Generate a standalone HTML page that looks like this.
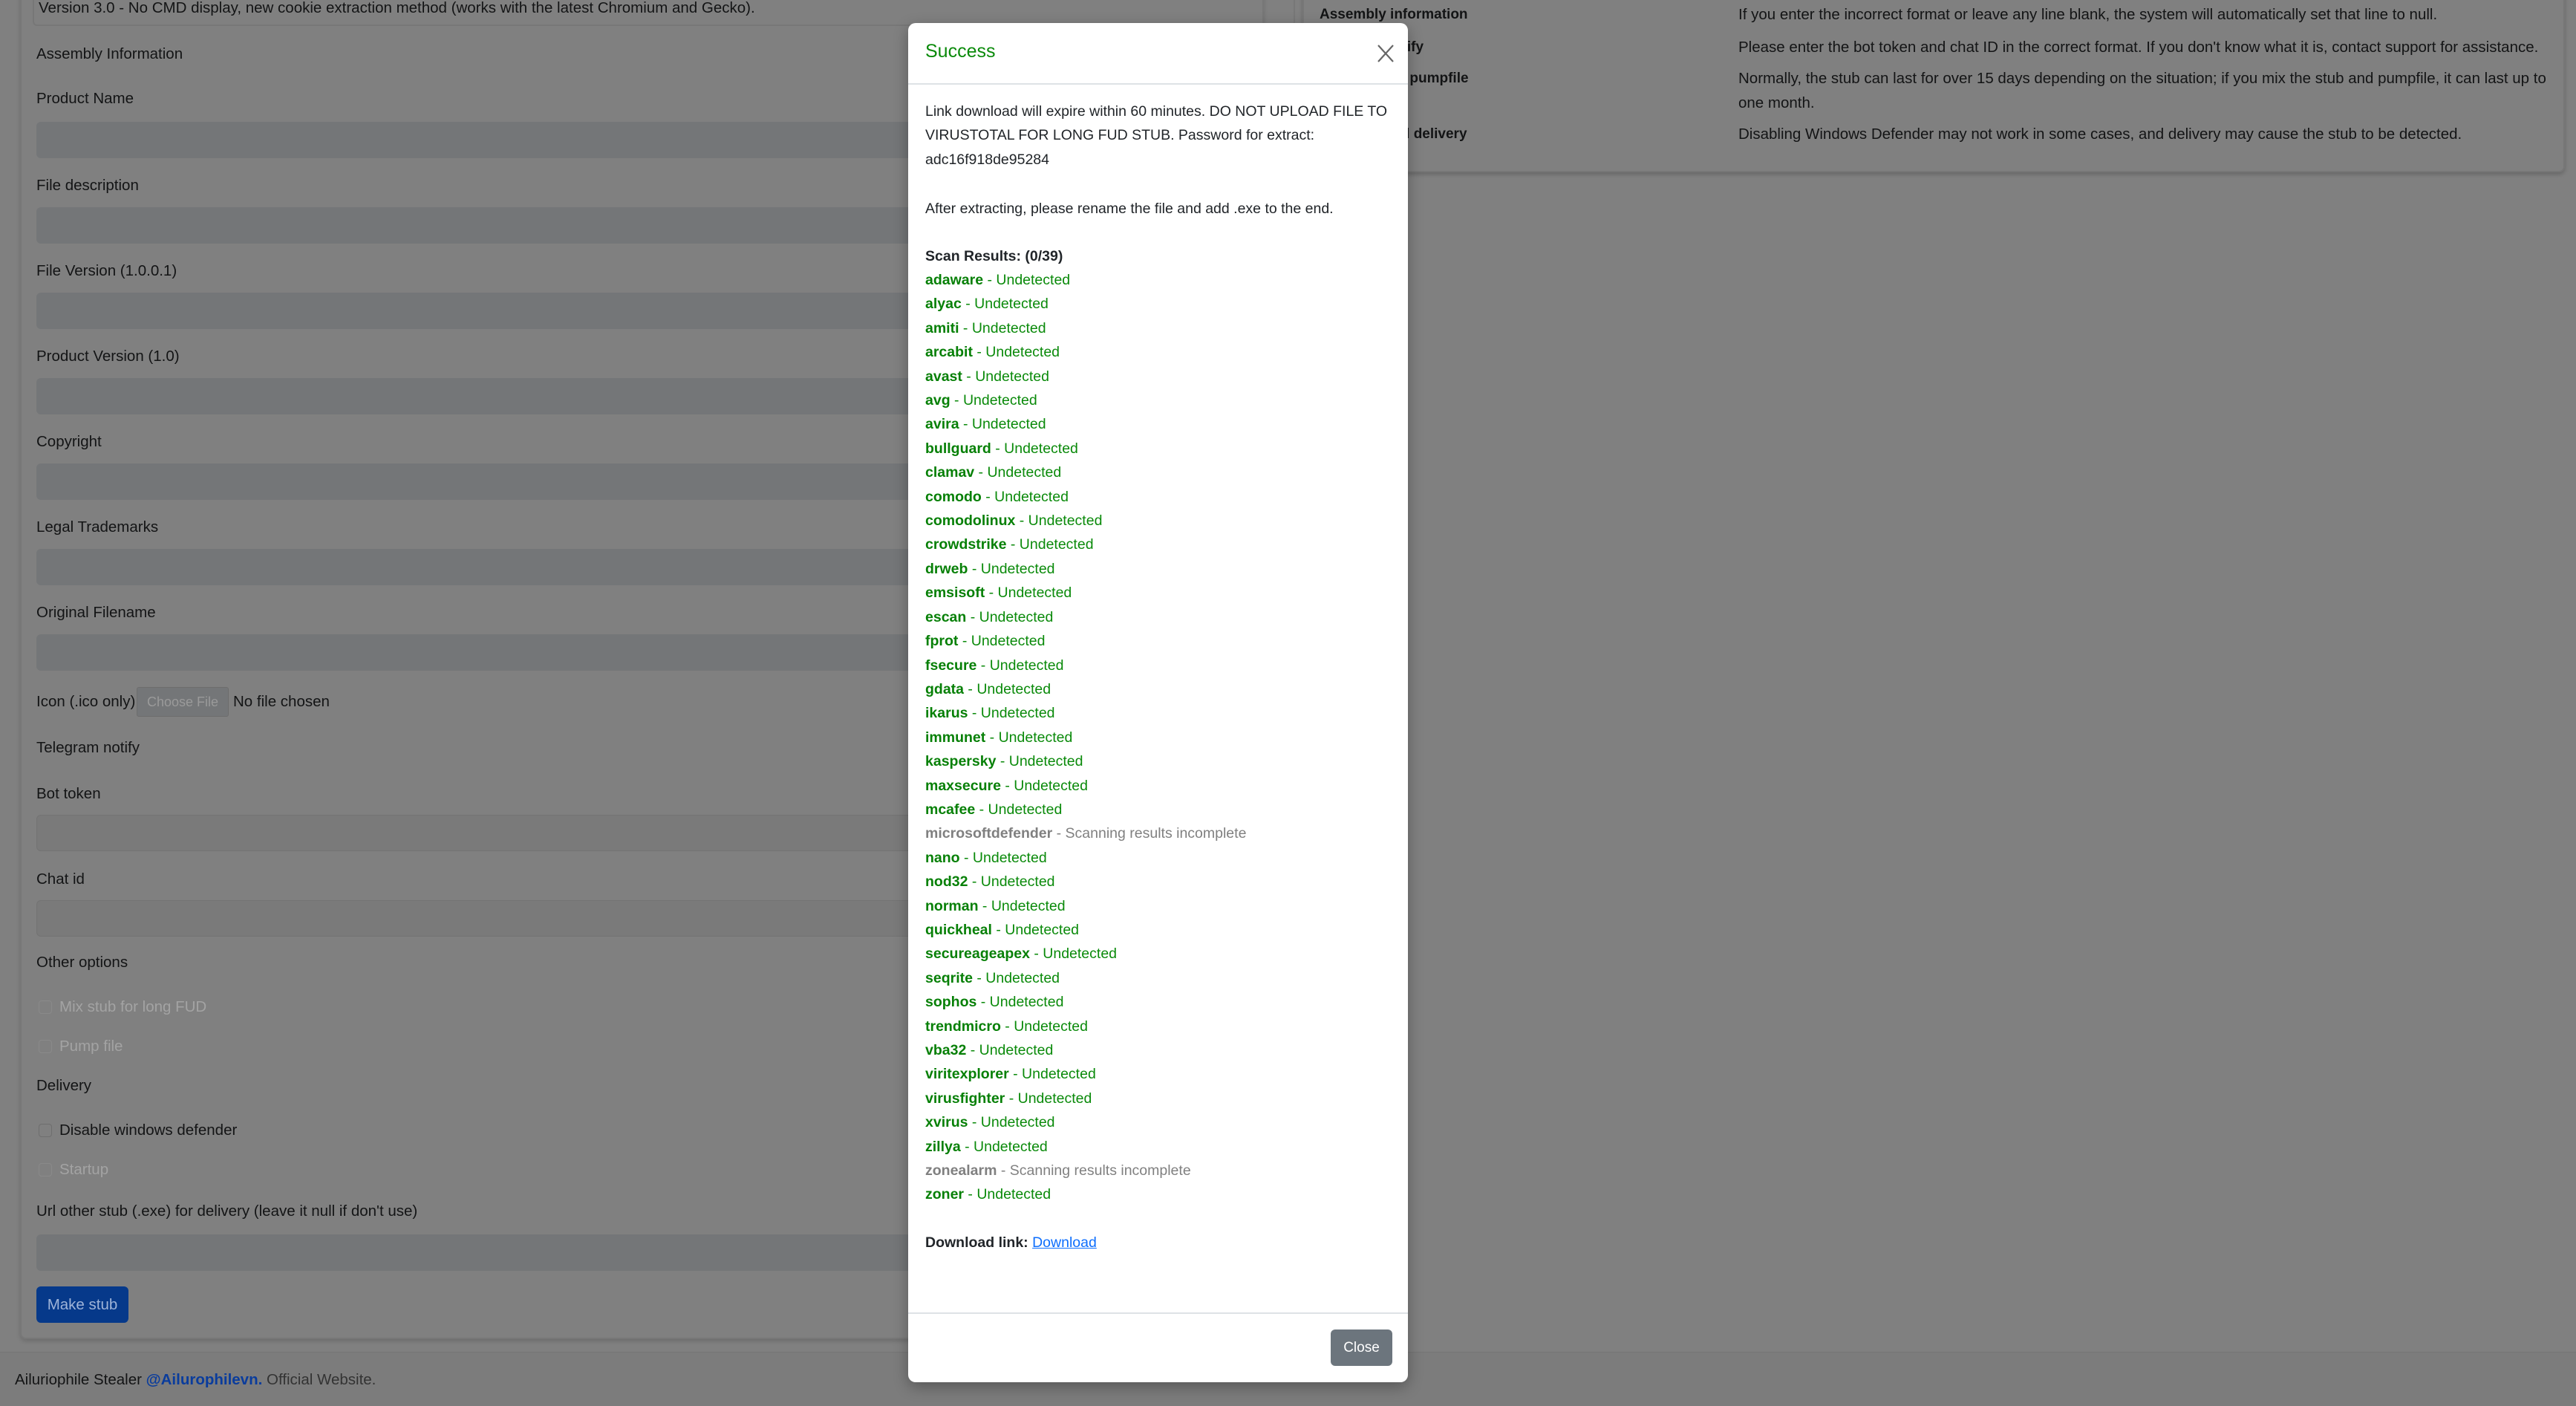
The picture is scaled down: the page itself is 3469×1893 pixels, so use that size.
<!DOCTYPE html>
<html><head><meta charset="utf-8">
<style>
*{margin:0;padding:0;box-sizing:border-box}
html,body{width:3469px;height:1893px;overflow:hidden}
body{background:#808080;font-family:"Liberation Sans",sans-serif;font-size:20.5px;color:#131415;position:relative}
.a{position:absolute;white-space:nowrap;line-height:30px}
.inp{position:absolute;left:49px;width:1640px;height:49px;background:#747678;border-radius:6px}
.card{position:absolute;left:27px;top:-20px;width:1675px;height:1823px;border:2px solid #777;border-radius:8px;box-shadow:0 3px 6px rgba(0,0,0,.15)}
.rcard{position:absolute;left:1754px;top:-20px;width:1700px;height:252px;border:2px solid #777;border-radius:8px;box-shadow:0 3px 6px rgba(0,0,0,.2)}
.cb{position:absolute;left:52px;width:18px;height:18px;border:1px solid #888;border-radius:4px}
.dis{color:#a3a3a3}
.modal{position:absolute;left:1223px;top:31px;width:673px;height:1830px;background:#fff;border-radius:10px;box-shadow:0 6px 20px rgba(0,0,0,.3)}
.m{position:absolute;left:23px;white-space:nowrap;line-height:32px;font-size:19.5px;color:#212529}
.g{color:#0a8a0a}.g b{color:#078007}
.gr{color:#808080}
</style></head><body>
<div class="card"></div>
<div style="position:absolute;left:44px;top:-10px;width:1700px;height:45px;border:2px solid #777;border-radius:6px"></div>
<div class="a" style="left:52px;top:-4px">Version 3.0 - No CMD display, new cookie extraction method (works with the latest Chromium and Gecko).</div>
<div class="a" style="left:49px;top:58px">Assembly Information</div>
<div class="a" style="left:49px;top:118px">Product Name</div><div class="inp" style="top:164px"></div>
<div class="a" style="left:49px;top:235px">File description</div><div class="inp" style="top:279px"></div>
<div class="a" style="left:49px;top:350px">File Version (1.0.0.1)</div><div class="inp" style="top:394px"></div>
<div class="a" style="left:49px;top:465px">Product Version (1.0)</div><div class="inp" style="top:509px"></div>
<div class="a" style="left:49px;top:580px">Copyright</div><div class="inp" style="top:624px"></div>
<div class="a" style="left:49px;top:695px">Legal Trademarks</div><div class="inp" style="top:739px"></div>
<div class="a" style="left:49px;top:810px">Original Filename</div><div class="inp" style="top:854px"></div>
<div class="a" style="left:49px;top:930px">Icon (.ico only)</div>
<div style="position:absolute;left:184px;top:925px;width:124px;height:40px;background:#747678;border:1px solid #6d6d6d;border-radius:3px;color:#9a9a9a;font-size:18px;line-height:38px;text-align:center">Choose File</div>
<div class="a" style="left:314px;top:930px">No file chosen</div>
<div class="a" style="left:49px;top:992px">Telegram notify</div>
<div class="a" style="left:49px;top:1054px">Bot token</div><div class="inp" style="top:1097px;background:#7a7a7a;border:1px solid #737373"></div>
<div class="a" style="left:49px;top:1169px">Chat id</div><div class="inp" style="top:1212px;background:#7a7a7a;border:1px solid #737373"></div>
<div class="a" style="left:49px;top:1281px">Other options</div>
<div class="cb" style="top:1347px;border-color:#8a8a8a"></div><div class="a dis" style="left:80px;top:1341px">Mix stub for long FUD</div>
<div class="cb" style="top:1400px;border-color:#8a8a8a"></div><div class="a dis" style="left:80px;top:1394px">Pump file</div>
<div class="a" style="left:49px;top:1447px">Delivery</div>
<div class="cb" style="top:1513px;border-color:#6e6e6e"></div><div class="a" style="left:80px;top:1507px">Disable windows defender</div>
<div class="cb" style="top:1566px;border-color:#8a8a8a"></div><div class="a dis" style="left:80px;top:1560px">Startup</div>
<div class="a" style="left:49px;top:1616px">Url other stub (.exe) for delivery (leave it null if don't use)</div>
<div class="inp" style="top:1662px"></div>
<div style="position:absolute;left:49px;top:1732px;width:124px;height:49px;background:#06398a;border-radius:6px;color:#9fb4d8;line-height:49px;text-align:center">Make stub</div>
<div style="position:absolute;left:0;top:1820px;width:3469px;height:73px;background:#7c7c7c;border-top:1px solid #757575"></div>
<div class="a" style="left:20px;top:1843px"><span style="color:#131415">Ailuriophile Stealer</span> <span style="color:#0a3c9c;font-weight:bold">@Ailurophilevn.</span> <span style="color:#333">Official Website.</span></div>

<div class="rcard"></div>
<div class="a" style="left:1777px;top:5px;font-weight:bold;font-size:19px">Assembly information</div>
<div class="a" style="left:1777px;top:49px;font-weight:bold;font-size:19px">Telegram notify</div>
<div class="a" style="left:1777px;top:91px;font-weight:bold;font-size:19px">Mix stub and pumpfile</div>
<div class="a" style="left:1777px;top:166px;font-weight:bold;font-size:19px">Defender and delivery</div>
<div class="a" style="left:2341px;top:5px">If you enter the incorrect format or leave any line blank, the system will automatically set that line to null.</div>
<div class="a" style="left:2341px;top:49px">Please enter the bot token and chat ID in the correct format. If you don't know what it is, contact support for assistance.</div>
<div class="a" style="left:2341px;top:91px">Normally, the stub can last for over 15 days depending on the situation; if you mix the stub and pumpfile, it can last up to</div>
<div class="a" style="left:2341px;top:124px">one month.</div>
<div class="a" style="left:2341px;top:166px">Disabling Windows Defender may not work in some cases, and delivery may cause the stub to be detected.</div>

<div class="modal">
<div class="m" style="top:22px;font-size:25px;color:#0a8a0a">Success</div>
<svg style="position:absolute;left:631px;top:28px" width="24" height="26" viewBox="0 0 24 26"><path d="M2 2L22 24M22 2L2 24" stroke="#666" stroke-width="2.2"/></svg>
<div style="position:absolute;left:0;top:81px;width:673px;height:2px;background:#dee2e6"></div>
<div class="m" style="top:103px">Link download will expire within 60 minutes. DO NOT UPLOAD FILE TO</div>
<div class="m" style="top:135px">VIRUSTOTAL FOR LONG FUD STUB. Password for extract:</div>
<div class="m" style="top:168px">adc16f918de95284</div>
<div class="m" style="top:234px">After extracting, please rename the file and add .exe to the end.</div>
<div class="m" style="top:298px;font-weight:bold">Scan Results: (0/39)</div>
<div style="position:absolute;left:23px;top:330px;line-height:32.4px;font-size:19.5px;white-space:nowrap">
<div class="g"><b>adaware</b> - Undetected</div>
<div class="g"><b>alyac</b> - Undetected</div>
<div class="g"><b>amiti</b> - Undetected</div>
<div class="g"><b>arcabit</b> - Undetected</div>
<div class="g"><b>avast</b> - Undetected</div>
<div class="g"><b>avg</b> - Undetected</div>
<div class="g"><b>avira</b> - Undetected</div>
<div class="g"><b>bullguard</b> - Undetected</div>
<div class="g"><b>clamav</b> - Undetected</div>
<div class="g"><b>comodo</b> - Undetected</div>
<div class="g"><b>comodolinux</b> - Undetected</div>
<div class="g"><b>crowdstrike</b> - Undetected</div>
<div class="g"><b>drweb</b> - Undetected</div>
<div class="g"><b>emsisoft</b> - Undetected</div>
<div class="g"><b>escan</b> - Undetected</div>
<div class="g"><b>fprot</b> - Undetected</div>
<div class="g"><b>fsecure</b> - Undetected</div>
<div class="g"><b>gdata</b> - Undetected</div>
<div class="g"><b>ikarus</b> - Undetected</div>
<div class="g"><b>immunet</b> - Undetected</div>
<div class="g"><b>kaspersky</b> - Undetected</div>
<div class="g"><b>maxsecure</b> - Undetected</div>
<div class="g"><b>mcafee</b> - Undetected</div>
<div class="gr"><b>microsoftdefender</b> - Scanning results incomplete</div>
<div class="g"><b>nano</b> - Undetected</div>
<div class="g"><b>nod32</b> - Undetected</div>
<div class="g"><b>norman</b> - Undetected</div>
<div class="g"><b>quickheal</b> - Undetected</div>
<div class="g"><b>secureageapex</b> - Undetected</div>
<div class="g"><b>seqrite</b> - Undetected</div>
<div class="g"><b>sophos</b> - Undetected</div>
<div class="g"><b>trendmicro</b> - Undetected</div>
<div class="g"><b>vba32</b> - Undetected</div>
<div class="g"><b>viritexplorer</b> - Undetected</div>
<div class="g"><b>virusfighter</b> - Undetected</div>
<div class="g"><b>xvirus</b> - Undetected</div>
<div class="g"><b>zillya</b> - Undetected</div>
<div class="gr"><b>zonealarm</b> - Scanning results incomplete</div>
<div class="g"><b>zoner</b> - Undetected</div>
</div>
<div class="m" style="top:1626px"><b>Download link:</b> <span style="color:#0d6efd;text-decoration:underline">Download</span></div>
<div style="position:absolute;left:0;top:1736px;width:673px;height:2px;background:#dee2e6"></div>
<div style="position:absolute;left:569px;top:1759px;width:83px;height:49px;background:#6c757d;border-radius:6px;color:#fff;font-size:19px;line-height:49px;text-align:center">Close</div>
</div>
</body></html>
